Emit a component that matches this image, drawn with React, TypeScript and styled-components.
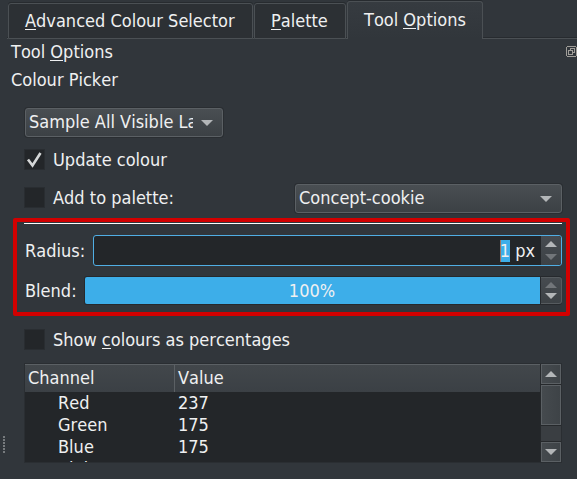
import React from "react";
import styled, { createGlobalStyle, css } from "styled-components";

const Global = createGlobalStyle`
  * { box-sizing: border-box; }
  html, body { margin: 0; overflow: hidden; background: #31363b; }
  body {
    font: 18px/22px "DejaVu Sans Condensed", "DejaVu Sans", sans-serif;
    font-stretch: condensed;
    font-kerning: none;
    color: #eff0f1;
    white-space: nowrap;
  }
`;

const Dock = styled.main`
  position: relative;
  width: 577px;
  height: 479px;
  overflow: hidden;
  background: #31363b;
`;

const TabBar = styled.div`
  display: flex;
  align-items: flex-end;
  height: 39px;
`;
const TabLine = styled.div<{ $w?: number }>`
  ${(p) => (p.$w ? `width: ${p.$w}px;` : "flex: 1;")}
  height: 2px;
  background: #4b5054;
  border-top: 1px solid #272b2f;
`;
const TabGap = styled.div<{ $w: number }>`
  width: ${(p) => p.$w}px;
`;
const Tab = styled.div<{ $w: number; $active?: boolean }>`
  width: ${(p) => p.$w}px;
  height: 36px;
  padding: 6px 0 0 16px;
  border: 1px solid #4b5054;
  border-radius: 3px 3px 0 0;
  background: #2c3034;
  box-shadow: 0 -1px 0 #272b2f;
  ${(p) =>
    p.$active &&
    css`
      height: 38px;
      padding-top: 7px;
      border-bottom: 0;
      background: linear-gradient(#363b40, #31363b);
    `}
`;

const Key = styled.span`
  background: linear-gradient(#eff0f1, #eff0f1) 0 19px / 100% 1px no-repeat;
`;

const TitleRow = styled.div`
  display: flex;
  justify-content: space-between;
  height: 28px;
  padding: 2px 0 0 11px;
`;
const FloatIcon = styled.svg`
  width: 11px;
  height: 11px;
  margin-top: 5px;
`;
const Heading = styled.div`
  height: 41px;
  padding: 2px 0 0 11px;
`;

const Form = styled.div`
  width: 562px;
  padding-left: 24px;
`;
const Row = styled.div<{ $h: number }>`
  display: flex;
  align-items: flex-start;
  height: ${(p) => p.$h}px;
`;
const CheckLabel = styled.span`
  padding-left: 8px;
`;
const FieldLabel = styled.span<{ $w: number; $top: number }>`
  flex: none;
  width: ${(p) => p.$w}px;
  padding: ${(p) => p.$top}px 0 0 1px;
`;

const Combo = styled.div<{ $w: number }>`
  display: flex;
  align-items: center;
  width: ${(p) => p.$w}px;
  height: 29px;
  margin-left: 1px;
  padding: 0 9px 0 3px;
  border: 1px solid #5b6064;
  border-radius: 3px;
  background: linear-gradient(#494e52, #3c4145);
  box-shadow: 0 0 0 1px #2a2e32;
`;
const ComboText = styled.span<{ $w: number }>`
  width: ${(p) => p.$w}px;
  margin-bottom: 1px;
  overflow: hidden;
`;
const Arrow = styled.svg`
  display: block;
  flex: none;
  width: 12px;
  height: 6px;
`;
const ComboArrow = styled(Arrow)`
  margin-left: auto;
`;

const Check = styled.span`
  flex: none;
  width: 21px;
  height: 21px;
  border: 1px solid #292d31;
  background: #232629;
  svg { display: block; width: 19px; height: 19px; }
`;
const PaletteSlot = styled.div`
  margin: -3px 0 0 auto;
`;

const Separator = styled.hr`
  height: 1px;
  margin: 0;
  border: 0;
  background: #fcfcfc;
`;

const FieldSlot = styled.div`
  display: flex;
  flex: 1;
  padding-top: 11px;
`;
const SpinBox = styled.div`
  display: flex;
  flex: 1;
  height: 31px;
  padding-left: 1px;
  border: 1px solid #50aee4;
  border-radius: 3px;
  background: #232629;
`;
const SpinValue = styled.div`
  display: flex;
  flex: 1;
  justify-content: flex-end;
  padding: 3px 6px 0 0;
  white-space: pre;
`;
const Selected = styled.span`
  height: 22px;
  margin-top: 1px;
  line-height: 22px;
  background: linear-gradient(90deg, #a0705c 1px, #3daee9 1px);
`;
const Unit = styled.span`
  line-height: 24px;
`;
const Steppers = styled.div<{ $h: number; $focused?: boolean }>`
  display: flex;
  flex-direction: column;
  align-items: center;
  justify-content: space-between;
  width: ${(p) => (p.$focused ? 20 : 21)}px;
  height: ${(p) => p.$h}px;
  padding: ${(p) => (p.$focused ? 5 : 4)}px 0;
  border: solid #565b5f;
  border-width: ${(p) => (p.$focused ? "0" : "1px 1px 1px 0")};
  border-radius: 0 3px 3px 0;
  background: linear-gradient(#464b50, #3d4246);
`;
const Slider = styled.div`
  display: flex;
  flex: 1;
  height: 29px;
  padding: 1px 0 1px 1px;
  background: #26292d;
  border-radius: 3px;
`;
const SliderFill = styled.div`
  flex: 1;
  margin-right: 1px;
  padding: 3px 1px 0 0;
  border-radius: 2px 0 0 2px;
  background: #3daee9;
  text-align: center;
`;

const Table = styled.div`
  display: flex;
  width: 538px;
  height: 100px;
  border: 1px solid #2a2e32;
  background: #232629;
`;
const Columns = styled.div`
  display: grid;
  flex: 1;
  grid-template-columns: 149px 1fr;
  grid-template-rows: 28px repeat(4, 22px);
  overflow: hidden;
`;
const HeadCell = styled.div`
  padding: 2px 0 0 3px;
  border: solid #5b6064;
  border-width: 1px 0 0 0;
  background: linear-gradient(#42474b, #3b4045);
  & + & { padding-left: 3px; border-left-width: 1px; }
`;
const Cell = styled.div<{ $x: number }>`
  padding-left: ${(p) => p.$x}px;
`;
const Scroll = styled.div`
  display: flex;
  flex-direction: column;
  width: 21px;
  padding-left: 1px;
  background: #26292c;
`;
const ScrollPart = styled.div<{ $h: number }>`
  display: flex;
  align-items: center;
  justify-content: center;
  height: ${(p) => p.$h}px;
  margin-bottom: 1px;
  border: 1px solid #5b6064;
  background: linear-gradient(90deg, #454a4e, #3e4347);
  &:last-child { margin-bottom: 0; }
`;
const Groove = styled.div`
  flex: 1;
  margin-bottom: 1px;
  background: #3a3e42;
`;

const Highlight = styled.div`
  position: absolute;
  left: 13px;
  top: 218px;
  width: 557px;
  height: 98px;
  border: 4px solid #d20000;
  border-radius: 2px;
`;
const Grip = styled.div`
  position: absolute;
  left: 3px;
  top: 436px;
  width: 2px;
  height: 17px;
  background: repeating-linear-gradient(#777b7e 0 2px, transparent 2px 3px);
`;

const Up = ({ dim = false }) => (
  <Arrow viewBox="0 0 12 6"><path d="M0 6 6 0l6 6z" fill={dim ? "#72767a" : "#b3b6b8"} /></Arrow>
);
const Down = ({ dim = false }) => (
  <Arrow viewBox="0 0 12 6"><path d="M0 0h12L6 6z" fill={dim ? "#72767a" : "#b3b6b8"} /></Arrow>
);
const Drop = () => (
  <ComboArrow viewBox="0 0 12 6"><path d="M0 0h12L6 6z" fill="#b3b6b8" /></ComboArrow>
);

const channels = [["Red", "237"], ["Green", "175"], ["Blue", "175"], ["Alpha", "255"]];

export default function App() {
  return (
    <Dock>
      <Global />
      <TabBar>
        <TabGap $w={7} />
        <TabLine $w={1} />
        <Tab $w={245}><Key>A</Key>dvanced Colour Selector</Tab>
        <TabLine $w={1} />
        <Tab $w={92}><Key>P</Key>alette</Tab>
        <TabLine $w={1} />
        <Tab $w={136} $active>Tool <Key>O</Key>ptions</Tab>
        <TabLine />
      </TabBar>
      <TitleRow>
        <span>Tool <Key>O</Key>ptions</span>
        <FloatIcon viewBox="0 0 11 11" fill="none" stroke="#a09e99" shapeRendering="crispEdges">
          <path d="M1 .5h9M1 10.5h9M.5 1v9M10.5 1v9M2.5 4.5h4v4h-4zM4.5 4.5v-2h4v4h-2" />
        </FloatIcon>
      </TitleRow>
      <Heading>Colour Picker</Heading>
      <Form>
        <Row $h={41}>
          <Combo $w={198}><ComboText $w={164}>Sample All Visible Layers</ComboText><Drop /></Combo>
        </Row>
        <Row $h={38}>
          <Check>
            <svg viewBox="0 0 19 19" fill="none" stroke="#d5d7d8" strokeWidth="2.6">
              <path d="M3 9.5 7.5 15.5 15.5 3" />
            </svg>
          </Check>
          <CheckLabel>Update colour</CheckLabel>
        </Row>
        <Row $h={36}>
          <Check />
          <CheckLabel>Add to palette:</CheckLabel>
          <PaletteSlot>
            <Combo $w={267}><ComboText $w={220}>Concept-cookie</ComboText><Drop /></Combo>
          </PaletteSlot>
        </Row>
        <Separator />
        <Row $h={41}>
          <FieldLabel $w={69} $top={16}>Radius:</FieldLabel>
          <FieldSlot>
            <SpinBox>
              <SpinValue><Selected>1</Selected><Unit> px</Unit></SpinValue>
              <Steppers $h={29} $focused><Up /><Down dim /></Steppers>
            </SpinBox>
          </FieldSlot>
        </Row>
        <Row $h={64}>
          <FieldLabel $w={60} $top={15}>Blend:</FieldLabel>
          <FieldSlot>
            <Slider>
              <SliderFill>100%</SliderFill>
              <Steppers $h={27}><Up dim /><Down /></Steppers>
            </Slider>
          </FieldSlot>
        </Row>
        <Row $h={34}>
          <Check />
          <CheckLabel>Show <Key>c</Key>olours as percentages</CheckLabel>
        </Row>
        <Table>
          <Columns>
            <HeadCell>Channel</HeadCell>
            <HeadCell>Value</HeadCell>
            {channels.map(([name, value]) => (
              <React.Fragment key={name}>
                <Cell $x={33}>{name}</Cell>
                <Cell $x={4}>{value}</Cell>
              </React.Fragment>
            ))}
          </Columns>
          <Scroll>
            <ScrollPart $h={20}><Up /></ScrollPart>
            <ScrollPart $h={40} />
            <Groove />
            <ScrollPart $h={20}><Down /></ScrollPart>
          </Scroll>
        </Table>
      </Form>
      <Highlight />
      <Grip />
    </Dock>
  );
}
